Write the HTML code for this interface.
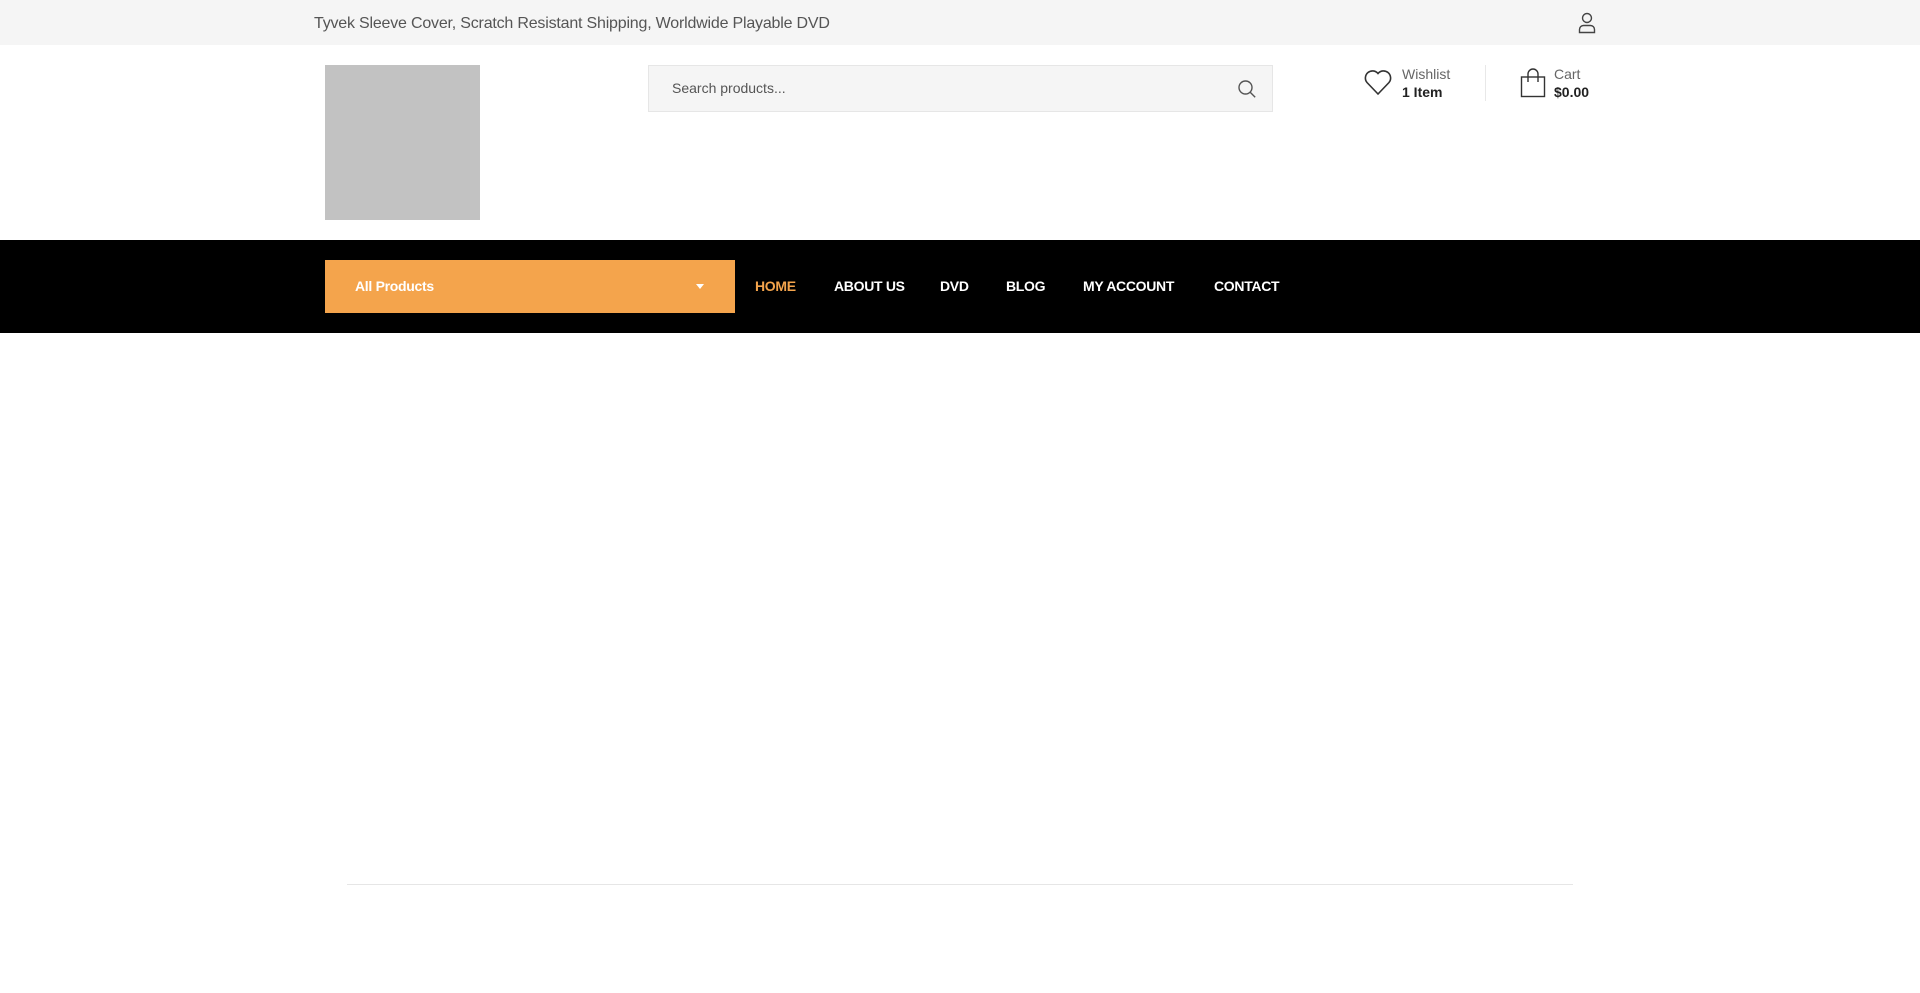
<!DOCTYPE html>
<html><head><meta charset="utf-8"><style>
*{margin:0;padding:0;box-sizing:border-box}
body{width:1920px;height:993px;background:#fff;font-family:"Liberation Sans",sans-serif;position:relative;overflow:hidden}
.a{position:absolute;white-space:nowrap}
.nav{font-size:14px;font-weight:bold;color:#fff;top:278px;letter-spacing:-0.3px}
</style></head><body>
<div class="a" style="left:0;top:0;width:1920px;height:45px;background:#f5f5f5"></div>
<div class="a" style="left:314px;top:15px;font-size:16px;color:#555;letter-spacing:-0.2px">Tyvek Sleeve Cover, Scratch Resistant Shipping, Worldwide Playable DVD</div>
<svg class="a" style="left:1577px;top:12px" width="20" height="22" viewBox="0 0 20 22" fill="none" stroke="#444" stroke-width="1.4"><circle cx="10" cy="6" r="4.5"/><path d="M2.5 20.5v-3a4 4 0 0 1 4-4h7a4 4 0 0 1 4 4v3z"/></svg>
<div class="a" style="left:325px;top:65px;width:155px;height:155px;background:#c2c2c2"></div>
<div class="a" style="left:648px;top:65px;width:625px;height:47px;background:#f5f5f5;border:1px solid #e6e6e6"></div>
<div class="a" style="left:672px;top:80px;font-size:14px;color:#555">Search products...</div>
<svg class="a" style="left:1237px;top:79px" width="20" height="20" viewBox="0 0 20 20" fill="none" stroke="#555" stroke-width="1.4"><circle cx="8.5" cy="8.5" r="6.5"/><path d="M13.2 13.2l5 5"/></svg>
<svg class="a" style="left:1363px;top:66px" width="30" height="30" viewBox="0 0 30 30" fill="none" stroke="#333" stroke-width="1.6"><path d="M15 28L4 16.5A6.5 6.5 0 0 1 15 7.5a6.5 6.5 0 0 1 11 9z"/></svg>
<div class="a" style="left:1402px;top:66px;font-size:14px;color:#666">Wishlist</div>
<div class="a" style="left:1402px;top:84px;font-size:14px;font-weight:bold;color:#222">1 Item</div>
<div class="a" style="left:1485px;top:65px;width:1px;height:36px;background:#e8e8e8"></div>
<svg class="a" style="left:1520px;top:68px" width="26" height="30" viewBox="0 0 26 30" fill="none" stroke="#333" stroke-width="1.4"><rect x="1.5" y="9" width="23" height="19.5"/><path d="M8 14V6a5 5 0 0 1 10 0v8"/></svg>
<div class="a" style="left:1554px;top:66px;font-size:14px;color:#666">Cart</div>
<div class="a" style="left:1554px;top:84px;font-size:14px;font-weight:bold;color:#222">$0.00</div>
<div class="a" style="left:0;top:240px;width:1920px;height:93px;background:#000"></div>
<div class="a" style="left:325px;top:260px;width:410px;height:53px;background:#f4a44c"></div>
<div class="a" style="left:355px;top:278px;font-size:14px;font-weight:bold;color:#fff;letter-spacing:-0.3px">All Products</div>
<div class="a" style="left:696px;top:284px;width:0;height:0;border-left:4px solid transparent;border-right:4px solid transparent;border-top:5px solid #fff"></div>
<div class="a nav" style="left:755px;color:#f4a44c">HOME</div>
<div class="a nav" style="left:834px">ABOUT US</div>
<div class="a nav" style="left:940px">DVD</div>
<div class="a nav" style="left:1006px">BLOG</div>
<div class="a nav" style="left:1083px">MY ACCOUNT</div>
<div class="a nav" style="left:1214px">CONTACT</div>
<div class="a" style="left:347px;top:884px;width:1226px;height:1px;background:#e6e6e6"></div>
</body></html>
